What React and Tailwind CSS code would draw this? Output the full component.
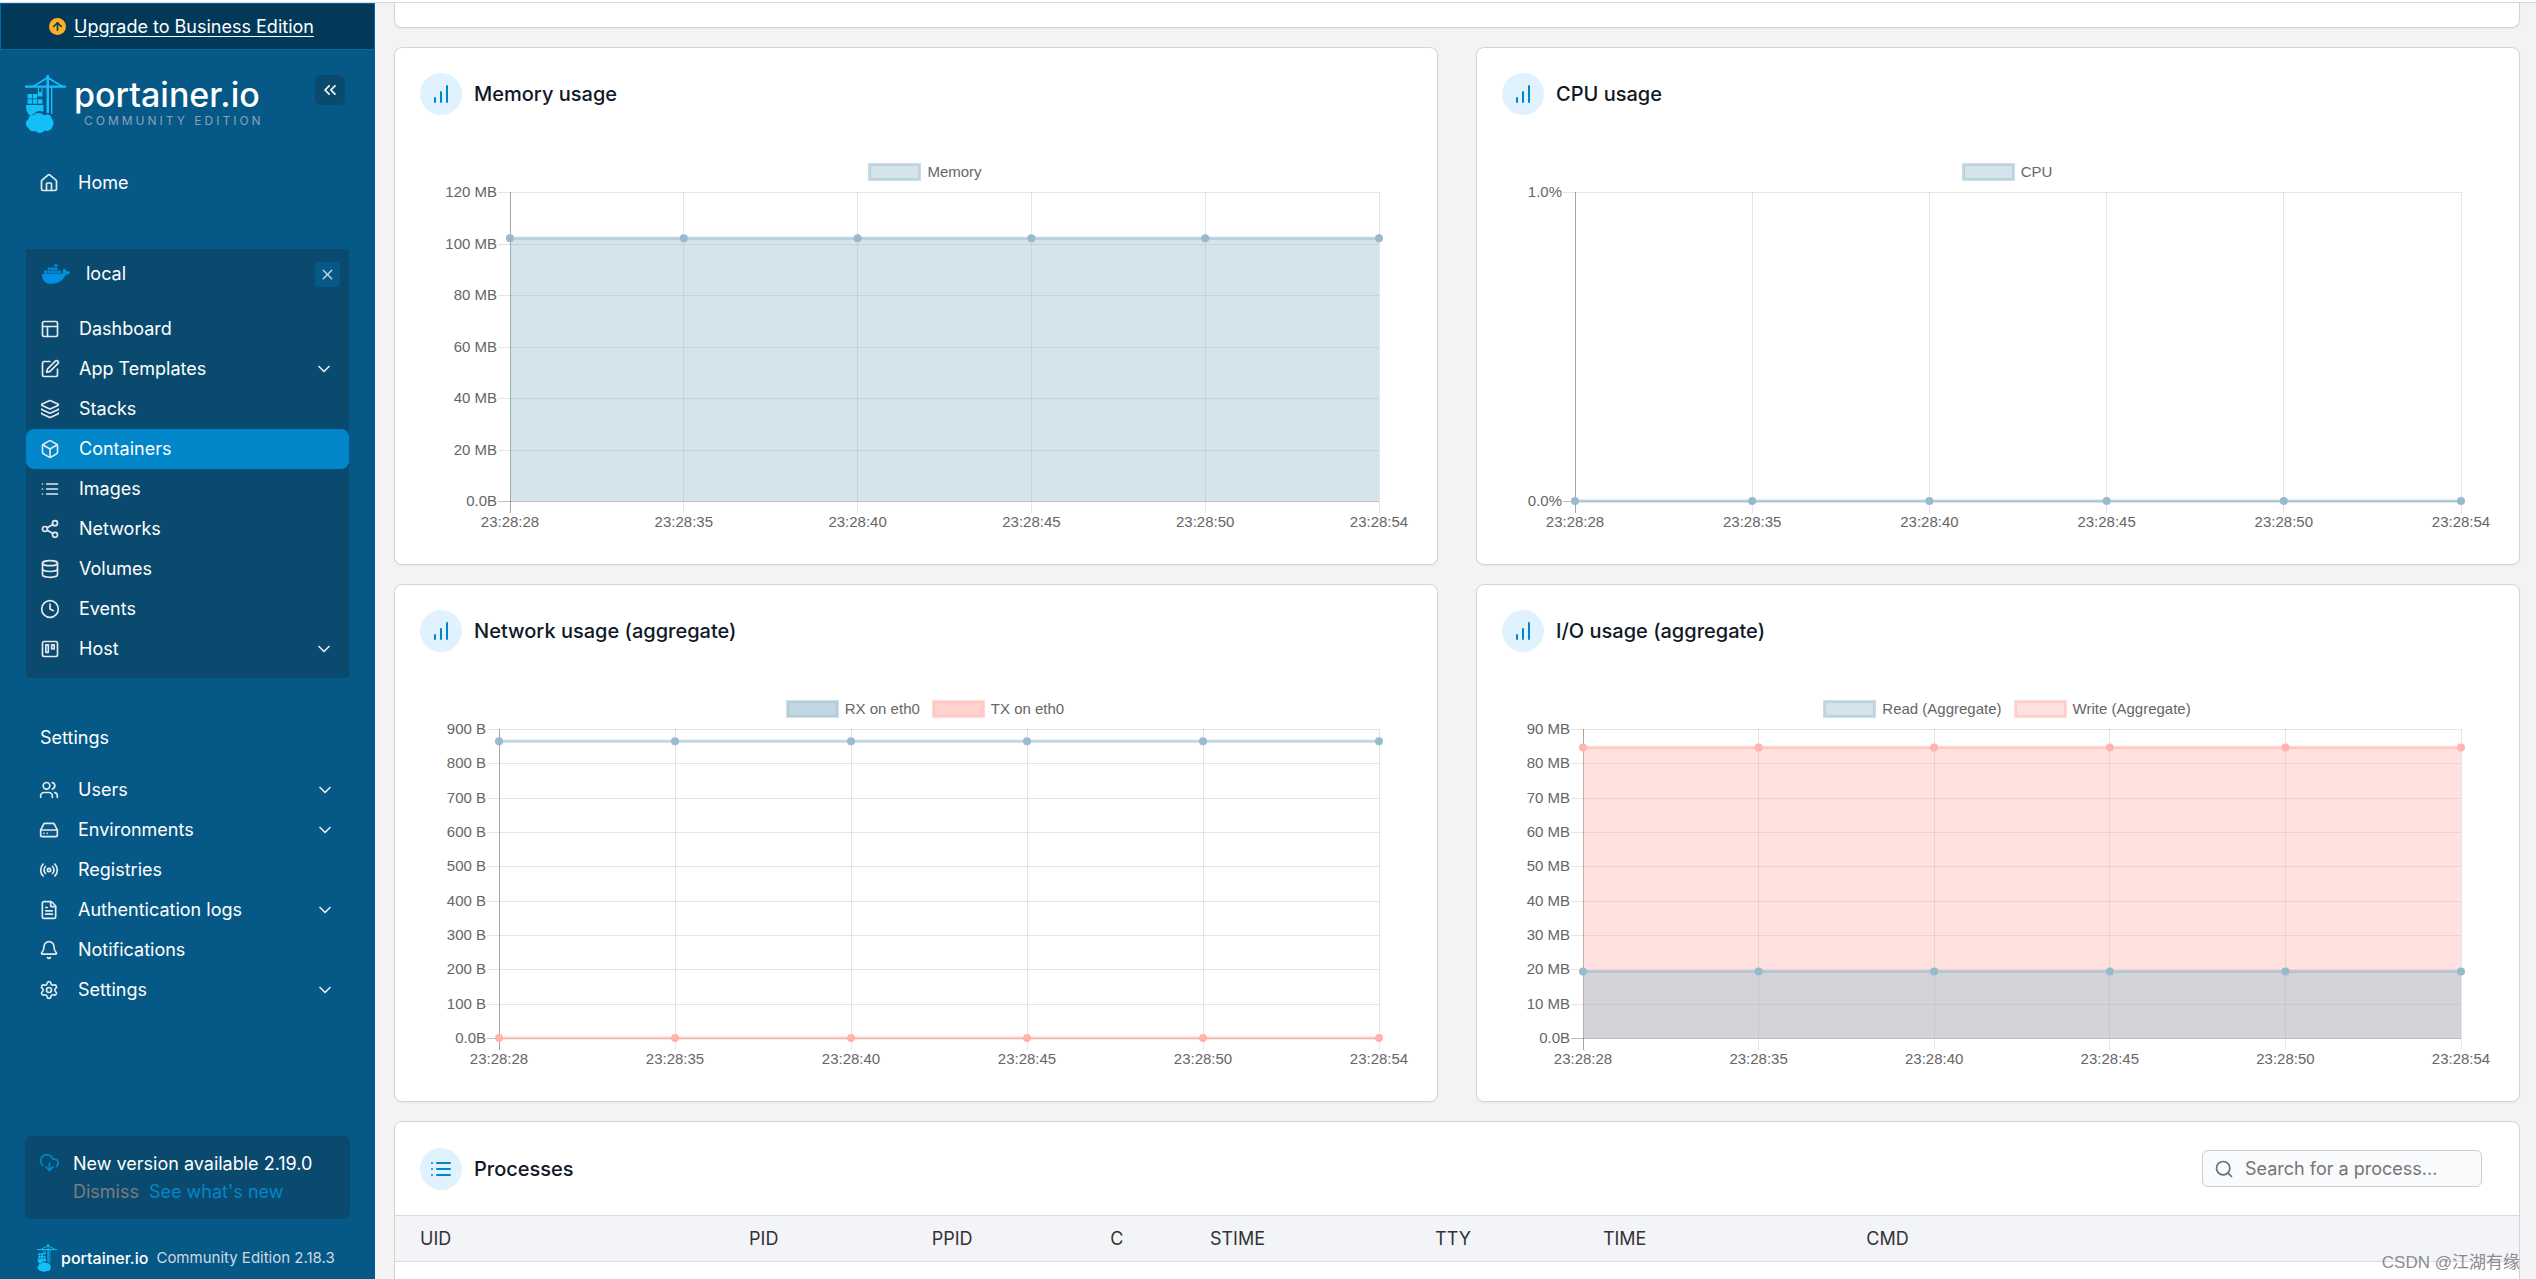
import {
  ArrowUp,
  Bell,
  Box,
  ChevronDown,
  ChevronsLeft,
  Clock,
  CloudDownload,
  Database,
  FileText,
  HardDrive,
  House,
  Layers,
  PanelsTopLeft,
  Radio,
  Search,
  Settings,
  Share2,
  SquarePen,
  Trello,
  Users,
  X
} from 'lucide-react';
import { FaDocker } from 'react-icons/fa';
import { FiBarChart, FiList } from 'react-icons/fi';

const BLUE = '151,187,205';
const PINK = '255,180,174';

const TIMES = ['23:28:28', '23:28:35', '23:28:40', '23:28:45', '23:28:50', '23:28:54'];

const localItems = [
  { label: 'Dashboard', icon: PanelsTopLeft },
  { label: 'App Templates', icon: SquarePen, expandable: true },
  { label: 'Stacks', icon: Layers },
  { label: 'Containers', icon: Box, active: true },
  { label: 'Images', icon: FiList },
  { label: 'Networks', icon: Share2 },
  { label: 'Volumes', icon: Database },
  { label: 'Events', icon: Clock },
  { label: 'Host', icon: Trello, expandable: true }
];

const settingsItems = [
  { label: 'Users', icon: Users, expandable: true },
  { label: 'Environments', icon: HardDrive, expandable: true },
  { label: 'Registries', icon: Radio },
  { label: 'Authentication logs', icon: FileText, expandable: true },
  { label: 'Notifications', icon: Bell },
  { label: 'Settings', icon: Settings, expandable: true }
];

const columns = [
  { label: 'UID', width: 'w-[16.2%]' },
  { label: 'PID', width: 'w-[8.6%]' },
  { label: 'PPID', width: 'w-[8.4%]' },
  { label: 'C', width: 'w-[4.7%]' },
  { label: 'STIME', width: 'w-[10.6%]' },
  { label: 'TTY', width: 'w-[7.9%]' },
  { label: 'TIME', width: 'w-[12.4%]' },
  { label: 'CMD', width: 'w-auto' }
];

// Crane with stacked containers, used in both logos
function CraneLogo({ className }) {
  return (
    <svg viewBox="0 0 41 58" className={className} fill="#13bef9" aria-hidden="true">
      <path d="M0 10.5h41v2.200H0z" />
      <path d="M21.500 0h2.500v38h-2.500zM26 12h1.400v27H26z" />
      <path d="M22.700 1.500 7 11.200h3L22.700 3.800 35.500 11.200h3z" />
      <path d="M13 12h1v5h-1zM16.500 12h1v5h-1zM12.800 17h4.600v4.500h-4.600z" />
      <path d="M2.500 19h4.500v4.500H2.500zM7.700 19h4.500v4.500H7.700zM2.500 24.300h4.500v4.500H2.500zM7.700 24.300h4.500v4.500H7.700zM12.900 24.300h4.500v4.500h-4.500z" />
      <path d="M1 30h17.500v6.800c-4-1.800-8-.6-9 2.200-1.500.2-2.600.8-3.500 1.700C3 39.500 1 36.500 1 30z" />
      <path d="M13.500 38c3 0 4.500 1 5.500 2.400 3.500-2.400 8-.2 7.600 3.200 2.400 2.200 2.400 6.500.6 8.600-1.200 3.600-5 4.200-7.600 3.400-2 3-7 3.200-9 .4-4 .8-6.600-.6-7-3-3.400-2-4-6.600-.2-8.600 0-3.600 3-5 5.600-4.200.8-1.400 2.500-2.200 4.500-2.200z" />
    </svg>
  );
}

function NavItem({ label, icon: Icon, expandable, active }) {
  return (
    <li>
      <a
        href="#"
        className={`flex h-10 items-center rounded-lg pl-3.5 pr-[15px] text-lg ${active ? 'bg-[#0086c9]' : ''}`}
      >
        <Icon size={20} className="shrink-0 text-[#e3eaf0]" />
        <span className="ml-[19px] flex-1 text-white">{label}</span>
        {expandable && <ChevronDown size={20} className="text-[#e3eaf0]" />}
      </a>
    </li>
  );
}

function Sidebar() {
  return (
    <aside className="flex w-[375px] shrink-0 flex-col bg-[#065986] text-white">
      <div className="flex h-[47px] shrink-0 items-center justify-center border border-[#026aa2] bg-[#023959] pr-3">
        <button type="button" className="flex items-center gap-2 text-lg">
          <span className="flex size-[17px] items-center justify-center rounded-full bg-[#fdb022]">
            <ArrowUp size={13} strokeWidth={3} className="text-[#023959]" />
          </span>
          <span className="underline underline-offset-3">Upgrade to Business Edition</span>
        </button>
      </div>

      <div className="flex items-start justify-between pl-[25px] pr-[30px] pt-[25px]">
        <a href="#" className="flex items-start gap-2">
          <CraneLogo className="h-[58px] w-[41px]" />
          <span className="flex flex-col">
            <span className="text-[34px] font-medium leading-10">portainer.io</span>
            <span className="-mt-1 pl-2.5 text-xs leading-5 tracking-[0.25em] text-[#8ea0b8]">COMMUNITY EDITION</span>
          </span>
        </a>
        <button type="button" aria-label="Collapse sidebar" className="flex size-[30px] items-center justify-center rounded-md bg-[#0b4a6f]">
          <ChevronsLeft size={20} />
        </button>
      </div>

      <nav className="px-[25px]">
        <ul className="mt-[30px]">
          <NavItem label="Home" icon={House} />
        </ul>

        <div className="mt-[45px] rounded border border-dotted border-[#026aa2] bg-[#0b4a6f] pb-[9px]">
          <div className="flex h-[50px] items-center pl-4 pr-[9px]">
            <FaDocker size={28} className="text-[#0091e2]" />
            <span className="ml-4 flex-1 text-lg">local</span>
            <button type="button" aria-label="Close environment" className="flex size-[25px] items-center justify-center rounded bg-[#065986]">
              <X size={17} className="text-[#c5d3de]" />
            </button>
          </div>
          <ul className="mt-2.5">
            {localItems.map((item) => (
              <NavItem key={item.label} {...item} />
            ))}
          </ul>
        </div>

        <h2 className="mt-[45px] pl-[15px] text-lg">Settings</h2>
        <ul className="mt-[18px]">
          {settingsItems.map((item) => (
            <NavItem key={item.label} {...item} />
          ))}
        </ul>
      </nav>

      <footer className="mt-auto px-[25px] pb-1">
        <div className="flex h-[83px] rounded-md bg-[#0b4a6f] pl-3.5 pt-3.5">
          <CloudDownload size={21} className="mt-0.5 text-[#0086c9]" />
          <div className="ml-[13px] text-lg leading-7">
            <p>New version available 2.19.0</p>
            <p className="flex gap-2.5">
              <button type="button" className="text-[#7c7c7c]">Dismiss</button>
              <a href="#" className="text-[#0086c9]">See what's new</a>
            </p>
          </div>
        </div>
        <div className="mt-[22px] flex h-[34px] items-center pl-3">
          <CraneLogo className="h-7 w-5" />
          <span className="ml-1 text-base font-medium">portainer.io</span>
          <span className="ml-2 text-[15px] text-[#cfd8e0]">Community Edition 2.18.3</span>
        </div>
      </footer>
    </aside>
  );
}

function CardTitle({ icon: Icon, children }) {
  return (
    <h2 className="flex items-center gap-3 text-xl font-medium text-[#101828]">
      <span className="flex size-[42px] items-center justify-center rounded-full bg-[#e0f2fe]">
        <Icon size={24} className="text-[#0086c9]" />
      </span>
      {children}
    </h2>
  );
}

const PLOT_HEIGHT = 309;

// Line chart: x positions are percentages, so the plot stretches with its card
function LineChart({ ticks, max, series, filled, gutter }) {
  const yOf = (value) => PLOT_HEIGHT - (value / max) * PLOT_HEIGHT;
  const xOf = (i) => `${(i / (TIMES.length - 1)) * 100}%`;

  return (
    <div className={`mr-[33px] ${gutter}`}>
      <svg className="block h-[309px] w-full overflow-visible font-['Liberation_Sans',sans-serif] text-[15px]" role="img">
        {ticks.map((tick, i) => {
          const y = Math.round((i / (ticks.length - 1)) * PLOT_HEIGHT);
          const last = i === ticks.length - 1;
          return (
            <g key={tick} stroke={last ? 'rgba(0,0,0,0.25)' : 'rgba(0,0,0,0.1)'} shapeRendering="crispEdges">
              <line x1="-12" x2="0" y1={y} y2={y} />
              <line x1="0" x2="100%" y1={y} y2={y} />
              <text x="-13" y={y + 5} textAnchor="end" fill="#666" stroke="none">{tick}</text>
            </g>
          );
        })}
        {TIMES.map((time, i) => (
          <g key={time} stroke={i === 0 ? 'rgba(0,0,0,0.35)' : 'rgba(0,0,0,0.1)'} shapeRendering="crispEdges">
            <line x1={xOf(i)} x2={xOf(i)} y1="0" y2={PLOT_HEIGHT + 12} />
            <text x={xOf(i)} y={PLOT_HEIGHT + 26} textAnchor="middle" fill="#666" stroke="none">{time}</text>
          </g>
        ))}
        {/* first series ends up on top */}
        {[...series].reverse().map((s) => (
          <g key={s.label}>
            {filled && <rect x="0" y={yOf(s.value)} width="100%" height={PLOT_HEIGHT - yOf(s.value)} fill={`rgba(${s.color},0.4)`} />}
            <line x1="0" x2="100%" y1={yOf(s.value)} y2={yOf(s.value)} stroke={`rgba(${s.color},0.6)`} strokeWidth="3" />
            {TIMES.map((time, i) => (
              <circle key={time} cx={xOf(i)} cy={yOf(s.value)} r="4" fill={`rgb(${s.color})`} />
            ))}
          </g>
        ))}
      </svg>
    </div>
  );
}

function ChartCard({ title, ...chart }) {
  return (
    <section className="h-[518px] rounded-lg border border-[#d0d5dd] bg-white px-[25px] pt-[25px] shadow-xs">
      <CardTitle icon={FiBarChart}>{title}</CardTitle>
      <ul className="mb-2.5 mt-[47px] flex h-5 items-center justify-center gap-3 pl-[18px] font-['Liberation_Sans',sans-serif] text-[15px] text-[#666]">
        {chart.series.map((s) => (
          <li key={s.label} className="flex items-center gap-1.5">
            <svg width="53" height="18">
              <rect
                x="1.5"
                y="1.5"
                width="50"
                height="15"
                fill={`rgba(${s.color},${chart.filled ? 0.4 : 0.6})`}
                stroke={`rgba(${s.color},0.5)`}
                strokeWidth="3"
              />
            </svg>
            {s.label}
          </li>
        ))}
      </ul>
      <LineChart {...chart} />
    </section>
  );
}

function Processes() {
  return (
    <section className="rounded-t-lg border border-[#d0d5dd] bg-white">
      <div className="flex h-[93px] items-center justify-between pl-[25px] pr-[37px]">
        <CardTitle icon={FiList}>Processes</CardTitle>
        <label className="flex h-[37px] w-[280px] items-center gap-[11px] rounded-md border border-[#ccc] bg-[#f9fafc] pl-[11px] pr-3">
          <Search size={20} className="shrink-0 text-[#667085]" />
          <input
            type="text"
            aria-label="Search for a process"
            placeholder="Search for a process..."
            className="w-full bg-transparent text-lg outline-none placeholder:text-[#757575]"
          />
        </label>
      </div>
      <table className="w-full table-fixed text-left text-lg text-[#333]">
        <thead>
          <tr className="h-[46px] border-y border-[#d9dbe0] bg-[#f2f4f8]">
            {columns.map((col) => (
              <th key={col.label} scope="col" className={`px-2.5 font-normal first:pl-[25px] ${col.width}`}>{col.label}</th>
            ))}
          </tr>
        </thead>
        <tbody>
          <tr className="h-12">
            <td colSpan={columns.length} />
          </tr>
        </tbody>
      </table>
    </section>
  );
}

export default function App() {
  return (
    <div className="relative flex h-screen flex-col overflow-hidden bg-white font-['Inter',sans-serif]">
      <div className="h-[3px] shrink-0 border-b border-[#d9d9d9]" />
      <div className="flex min-h-0 flex-1">
        <Sidebar />
        <main className="min-w-0 flex-1 overflow-hidden bg-[#f3f3f3] pl-[19px] pr-4">
          <div className="h-[25px] rounded-b-lg border border-t-0 border-[#d0d5dd] bg-white shadow-xs" />
          <div className="my-[19px] grid grid-cols-2 gap-x-[38px] gap-y-[19px]">
            <ChartCard
              title="Memory usage"
              ticks={['120 MB', '100 MB', '80 MB', '60 MB', '40 MB', '20 MB', '0.0B']}
              max={120}
              filled
              gutter="ml-[90px]"
              series={[{ label: 'Memory', value: 102, color: BLUE }]}
            />
            <ChartCard
              title="CPU usage"
              ticks={['1.0%', '0.0%']}
              max={1}
              filled
              gutter="ml-[73px]"
              series={[{ label: 'CPU', value: 0, color: BLUE }]}
            />
            <ChartCard
              title="Network usage (aggregate)"
              ticks={['900 B', '800 B', '700 B', '600 B', '500 B', '400 B', '300 B', '200 B', '100 B', '0.0B']}
              max={900}
              gutter="ml-[79px]"
              series={[
                { label: 'RX on eth0', value: 864, color: BLUE },
                { label: 'TX on eth0', value: 0, color: PINK }
              ]}
            />
            <ChartCard
              title="I/O usage (aggregate)"
              ticks={['90 MB', '80 MB', '70 MB', '60 MB', '50 MB', '40 MB', '30 MB', '20 MB', '10 MB', '0.0B']}
              max={90}
              filled
              gutter="ml-[81px]"
              series={[
                { label: 'Read (Aggregate)', value: 19.4, color: BLUE },
                { label: 'Write (Aggregate)', value: 84.6, color: PINK }
              ]}
            />
          </div>
          <Processes />
        </main>
      </div>
      <span className="absolute bottom-1 right-4 font-['Liberation_Sans','Noto_Sans_CJK_SC',sans-serif] text-[17px] text-[#8c8c8c]">
        CSDN @江湖有缘
      </span>
    </div>
  );
}
